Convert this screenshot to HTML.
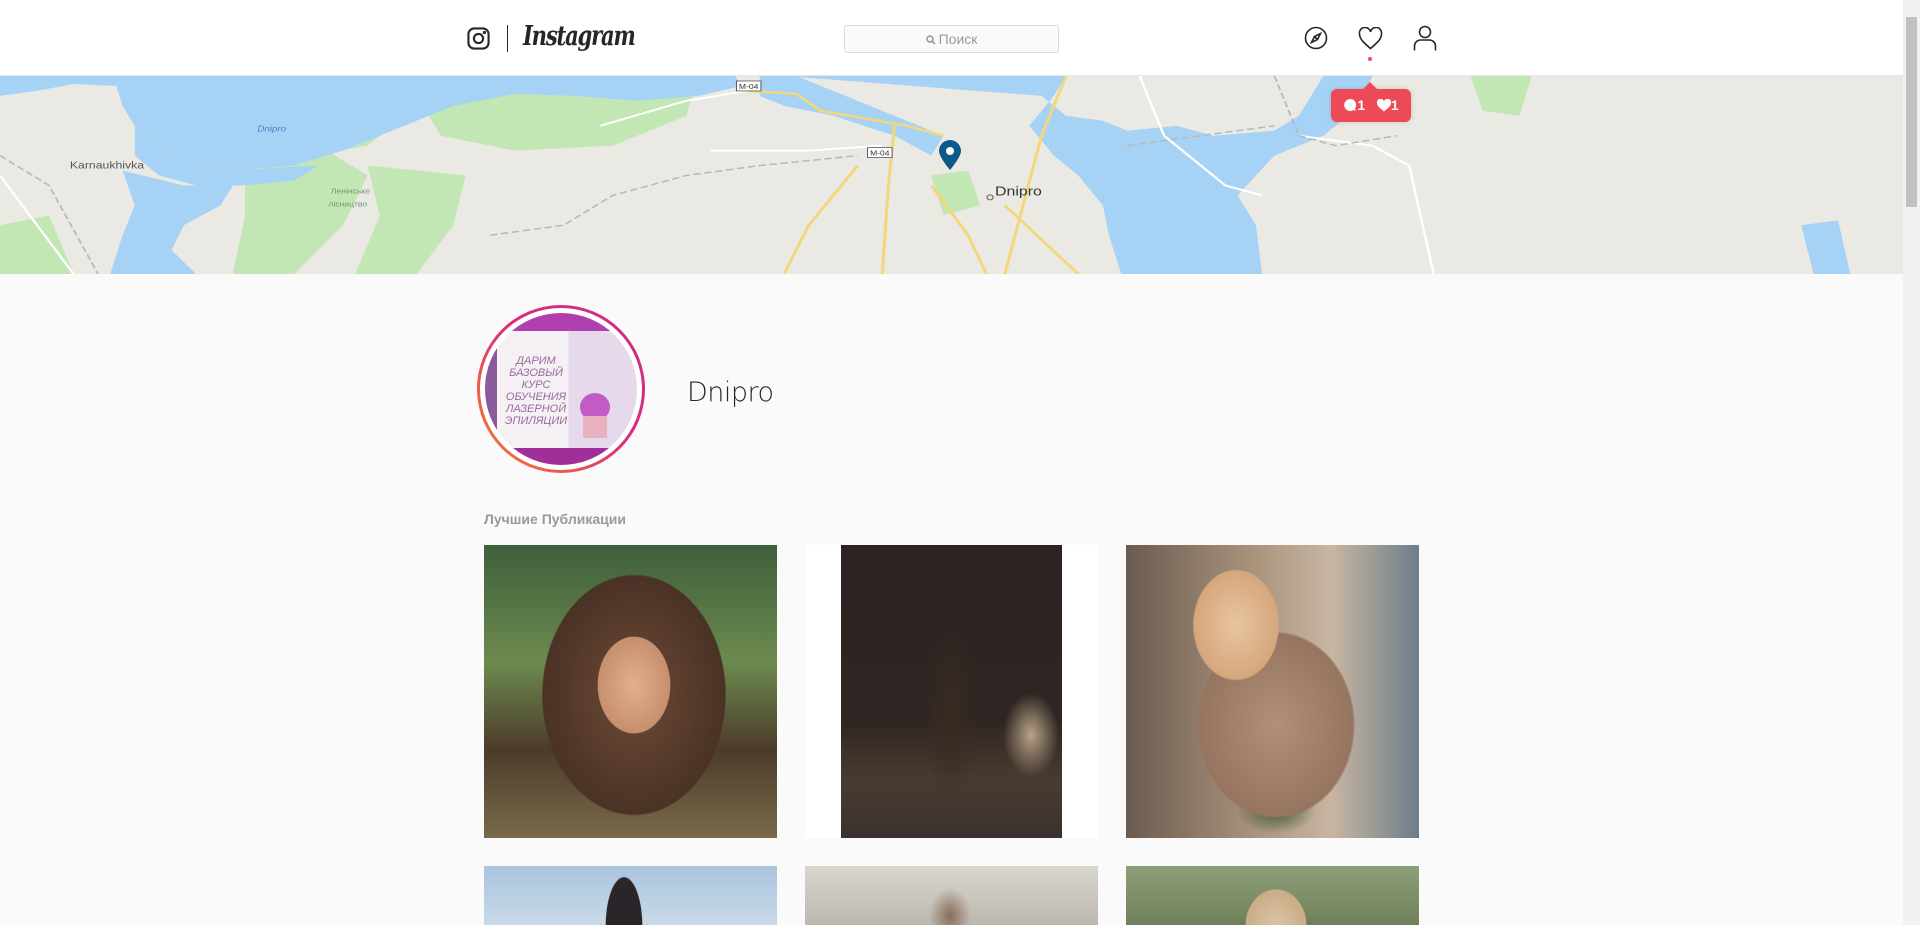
<!DOCTYPE html>
<html><head><meta charset="utf-8">
<style>
*{margin:0;padding:0;box-sizing:border-box}
html,body{width:1920px;height:925px;overflow:hidden;background:#fafafa;font-family:"Liberation Sans","Noto Sans CJK SC",sans-serif}
#root{position:relative;width:1920px;height:925px;overflow:hidden;background:#fafafa}
.hdr{position:absolute;left:0;top:0;width:1903px;height:76px;background:#fff;border-bottom:1px solid #e6e6e6}
.map{position:absolute;left:0;top:76px;width:1903px;height:198px;background:#ebe9e4;overflow:hidden}
.sb{position:absolute;left:1903px;top:0;width:17px;height:925px;background:#f1f1f1}
.thumb{position:absolute;left:1906px;top:17px;width:11px;height:190px;background:#c1c1c1}
.tile{position:absolute;width:293px;height:293px;overflow:hidden}
</style></head><body><div id="root">
<div class="hdr">
 <svg style="position:absolute;left:467px;top:27px" width="23" height="23" viewBox="0 0 24 24" fill="none" stroke="#262626" stroke-width="2.2"><rect x="1.5" y="1.5" width="21" height="21" rx="6"/><circle cx="12" cy="12" r="4.8"/><circle cx="18.2" cy="5.8" r="0.6" fill="#262626"/></svg>
 <div style="position:absolute;left:507px;top:25px;width:1px;height:27px;background:#262626"></div>
 <div style="position:absolute;left:523px;top:21px;font-family:'DejaVu Serif',serif;font-style:italic;font-weight:bold;font-size:27px;color:#262626;letter-spacing:-1.5px;transform:scaleX(0.78);transform-origin:left">Instagram</div>
 <div style="position:absolute;left:844px;top:25px;width:215px;height:28px;background:#fafafa;border:1px solid #dbdbdb;border-radius:3px;text-align:center;font-size:14px;line-height:26px;color:#999">
  <svg width="10" height="10" viewBox="0 0 10 10" style="vertical-align:-1px;margin-right:3px"><circle cx="4" cy="4" r="3" stroke="#999" stroke-width="1.6" fill="none"/><path d="M6.2 6.2L9 9" stroke="#999" stroke-width="1.6"/></svg>Поиск</div>
 <svg style="position:absolute;left:1304px;top:26px" width="24" height="24" viewBox="0 0 24 24" fill="none" stroke="#262626" stroke-width="1.6"><circle cx="12" cy="12" r="10.5"/><path d="M16.5 7.5L13.5 13.5 7.5 16.5 10.5 10.5Z"/><path d="M10.5 10.5L13.5 13.5" /></svg>
 <svg style="position:absolute;left:1358px;top:27px" width="25" height="23" viewBox="0 0 25 23" fill="none" stroke="#262626" stroke-width="1.6"><path d="M12.5 21.5C6 16 1.5 12 1.5 7A5.5 5.5 0 0 1 12.5 5A5.5 5.5 0 0 1 23.5 7C23.5 12 19 16 12.5 21.5Z"/></svg>
 <div style="position:absolute;left:1368px;top:57px;width:4px;height:4px;border-radius:2px;background:#ed4956"></div>
 <svg style="position:absolute;left:1413px;top:25px" width="24" height="26" viewBox="0 0 24 26" fill="none" stroke="#262626" stroke-width="1.6"><circle cx="12" cy="7" r="5.5"/><path d="M1.5 25.5V21A6 6 0 0 1 7.5 15H16.5A6 6 0 0 1 22.5 21V25.5"/></svg>
</div>
<div class="map">
<svg width="1903" height="198" viewBox="0 0 1553 199" preserveAspectRatio="none">
 <g fill="#c2e6b4">
  <path d="M100 0H300L330 40L300 70L230 85L160 70L120 40Z"/>
  <path d="M330 0H570L560 40L500 70L420 75L360 60Z"/>
  <path d="M200 80L260 70L300 100L280 150L240 199H190L200 140Z"/>
  <path d="M300 90L380 100L370 150L340 199H290L310 140Z"/>
  <path d="M1200 0H1250L1240 40L1210 35Z"/>
  <path d="M0 150L40 140L60 199H0Z"/>
  <path d="M760 100L790 95L800 130L770 140Z"/>
 </g>
 <g fill="#a6d3f5">
  <path d="M0 0H600L605 10L570 20L520 25L470 20L420 18L370 30L340 45L310 60L280 75L240 90L190 95L150 85L125 70L110 50L100 30L95 10L60 8L30 15L0 20Z"/>
  <path d="M110 50L125 70L150 85L190 95L230 92L260 90L240 105L200 110L160 110L130 100L110 80Z"/>
  <path d="M100 95L150 110L190 110L180 130L150 150L140 175L160 199H90L100 160L110 130Z"/>
  <path d="M640 0H870L860 20L840 50L860 80L880 100L900 130L905 160L915 199H1030L1025 150L1010 120L1040 80L1080 60L1110 30L1120 0H1080L1060 40L1040 55L990 60L960 50L920 55L900 45L870 40L850 20Z"/>
  <path d="M620 0H650L700 25L740 45L770 60L760 80L730 60L680 40L640 30L620 20Z"/>
  <path d="M1470 150L1500 145L1510 199H1480Z"/>
 </g>
 <g fill="none" stroke="#f3d77a" stroke-width="2.5">
  <path d="M610 15L650 18L670 35L740 50L770 60"/>
  <path d="M730 50L725 110L720 199"/>
  <path d="M700 90L660 150L640 199"/>
  <path d="M760 110L790 160L805 199"/>
  <path d="M870 0L850 60L820 199"/>
  <path d="M820 130L880 199"/>
 </g>
 <g fill="none" stroke="#fff" stroke-width="2">
  <path d="M490 50L560 25L610 15"/><path d="M580 75L660 75L720 70"/><path d="M930 0L950 60L1000 110L1030 120"/><path d="M1060 60L1120 70L1150 90L1170 199"/><path d="M0 100L60 199"/>
 </g>
 <g fill="none" stroke="#b8b8b8" stroke-width="1.5" stroke-dasharray="6 3">
  <path d="M0 80L40 110L80 199"/><path d="M400 160L460 150L500 120L560 100L620 90L700 80"/><path d="M920 70L980 60L1040 50"/><path d="M1040 0L1060 60L1090 70L1140 60"/>
 </g>
 <rect x="601" y="5" width="20" height="10" fill="#fff" stroke="#555" stroke-width="0.8"/><text x="611" y="13" font-size="7" text-anchor="middle" fill="#333" font-family="Liberation Sans">M-04</text>
 <rect x="708" y="72" width="20" height="10" fill="#fff" stroke="#555" stroke-width="0.8"/><text x="718" y="80" font-size="7" text-anchor="middle" fill="#333" font-family="Liberation Sans">M-04</text>
 <text x="57" y="93" font-size="10" fill="#555" font-family="Liberation Sans">Karnaukhivka</text>
 <text x="210" y="56" font-size="8" fill="#4a7ec0" font-style="italic" font-family="Liberation Sans">Dnipro</text>
 <text x="270" y="118" font-size="7" fill="#6a9a6a" font-family="Liberation Sans">Ленінське</text>
 <text x="268" y="131" font-size="7" fill="#6a9a6a" font-family="Liberation Sans">лісництво</text>
 <text x="812" y="120" font-size="13" fill="#333" font-family="Liberation Sans">Dnipro</text>
 <circle cx="808" cy="122" r="2.5" fill="none" stroke="#666"/>
</svg>
 <svg style="position:absolute;left:939px;top:64px" width="22" height="30" viewBox="0 0 22 30"><path d="M11 30C11 30 0 17 0 11A11 11 0 0 1 22 11C22 17 11 30 11 30Z" fill="#0d5a8a"/><circle cx="11" cy="11" r="4" fill="#fff"/></svg>
 <div style="position:absolute;left:1331px;top:13px;width:80px;height:33px;background:#ed4956;border-radius:6px;box-shadow:0 0 6px rgba(0,0,0,.15);color:#fff;font-weight:bold;font-size:14px;line-height:33px;text-align:center">
  <div style="position:absolute;left:32px;top:-7px;border-left:7px solid transparent;border-right:7px solid transparent;border-bottom:7px solid #ed4956"></div>
  <svg width="14" height="14" viewBox="0 0 14 14" style="vertical-align:-2px"><path d="M7 1A6 6 0 1 0 10.5 12L13 13L12 10.5A6 6 0 0 0 7 1Z" fill="#fff"/></svg>1&nbsp;&nbsp;
  <svg width="14" height="13" viewBox="0 0 14 13" style="vertical-align:-2px"><path d="M7 12.5C3 9 0 7 0 4A3.5 3.5 0 0 1 7 2.5A3.5 3.5 0 0 1 14 4C14 7 11 9 7 12.5Z" fill="#fff"/></svg>1</div>
</div>
<div class="sb"></div><div class="thumb"></div>
<div style="position:absolute;left:477px;top:305px;width:168px;height:168px;border-radius:50%;background:linear-gradient(45deg,#f58529,#dd2a7b 55%,#c13584)"></div>
<div style="position:absolute;left:480px;top:308px;width:162px;height:162px;border-radius:50%;background:#fff"></div>
<div style="position:absolute;left:485px;top:313px;width:152px;height:152px;border-radius:50%;overflow:hidden;background:linear-gradient(90deg,#8a5a9a 0,#8a5a9a 8%,#f4f0f4 8%,#f4f0f4 55%,#e7d9ec 55%);">
 <div style="position:absolute;left:0;top:0;width:152px;height:18px;background:#b040b0"></div>
 <div style="position:absolute;left:0;top:135px;width:152px;height:20px;background:#a02f9a"></div>
 <div style="position:absolute;left:16px;top:42px;width:70px;text-align:center;font-size:11px;line-height:12px;font-style:italic;color:#9a6a9e;font-family:'Liberation Sans',sans-serif">ДАРИМ БАЗОВЫЙ КУРС ОБУЧЕНИЯ ЛАЗЕРНОЙ ЭПИЛЯЦИИ</div>
 <div style="position:absolute;left:95px;top:80px;width:30px;height:28px;border-radius:50%;background:#c25bc4"></div>
 <div style="position:absolute;left:98px;top:103px;width:24px;height:22px;background:#e9b1bf"></div>
</div>
<div style="position:absolute;left:687px;top:377px;font-size:27px;color:#262626;font-family:'DejaVu Sans',sans-serif;font-weight:200;letter-spacing:-0.5px">Dnipro</div>
<div style="position:absolute;left:484px;top:511px;font-size:14px;font-weight:bold;color:#999">Лучшие Публикации</div>

<div class="tile" style="left:484px;top:545px;background:radial-gradient(ellipse 60px 80px at 150px 140px,#e0b08f,#c78f6e 60%,transparent 61%),radial-gradient(ellipse 130px 170px at 150px 150px,#6e4a35,#4a3226 70%,transparent 71%),linear-gradient(180deg,#3f5f3b,#6c8a4f 40%,#4c3b2a 70%,#7a6a4a)"></div>
<div class="tile" style="left:805px;top:545px;background:#fff"><div style="position:absolute;left:36px;top:0;width:221px;height:293px;background:radial-gradient(ellipse 40px 130px at 110px 170px,#3a2a22,transparent 70%),radial-gradient(ellipse 40px 60px at 190px 190px,#b9a48a,transparent 70%),linear-gradient(180deg,#2b2422,#2e2622 60%,#4a3b30 80%,#3a3230)"></div></div>
<div class="tile" style="left:1126px;top:545px;background:radial-gradient(ellipse 70px 90px at 110px 80px,#e8c49e,#d6a77d 60%,transparent 62%),radial-gradient(ellipse 110px 130px at 150px 180px,#b09078,#967560 70%,transparent 72%),radial-gradient(ellipse 50px 30px at 150px 265px,#3f5a32,transparent 80%),linear-gradient(90deg,#6a5b50,#a48e78 40%,#c8b6a2 70%,#6e7d8a)"></div>
<div class="tile" style="left:484px;top:866px;height:59px;background:radial-gradient(ellipse 30px 80px at 140px 60px,#2a2528,#2a2528 60%,transparent 62%),linear-gradient(180deg,#a9c4de,#c9d9e8)"></div>
<div class="tile" style="left:805px;top:866px;height:59px;background:radial-gradient(ellipse 30px 40px at 145px 50px,#8a6d5a,transparent 70%),linear-gradient(180deg,#d8d6cf,#bdb8ae)"></div>
<div class="tile" style="left:1126px;top:866px;height:59px;background:radial-gradient(ellipse 50px 60px at 150px 60px,#d9c4a6,#c9ad86 60%,transparent 62%),linear-gradient(180deg,#8ea07a,#6e7f5a)"></div>
</div></body></html>
